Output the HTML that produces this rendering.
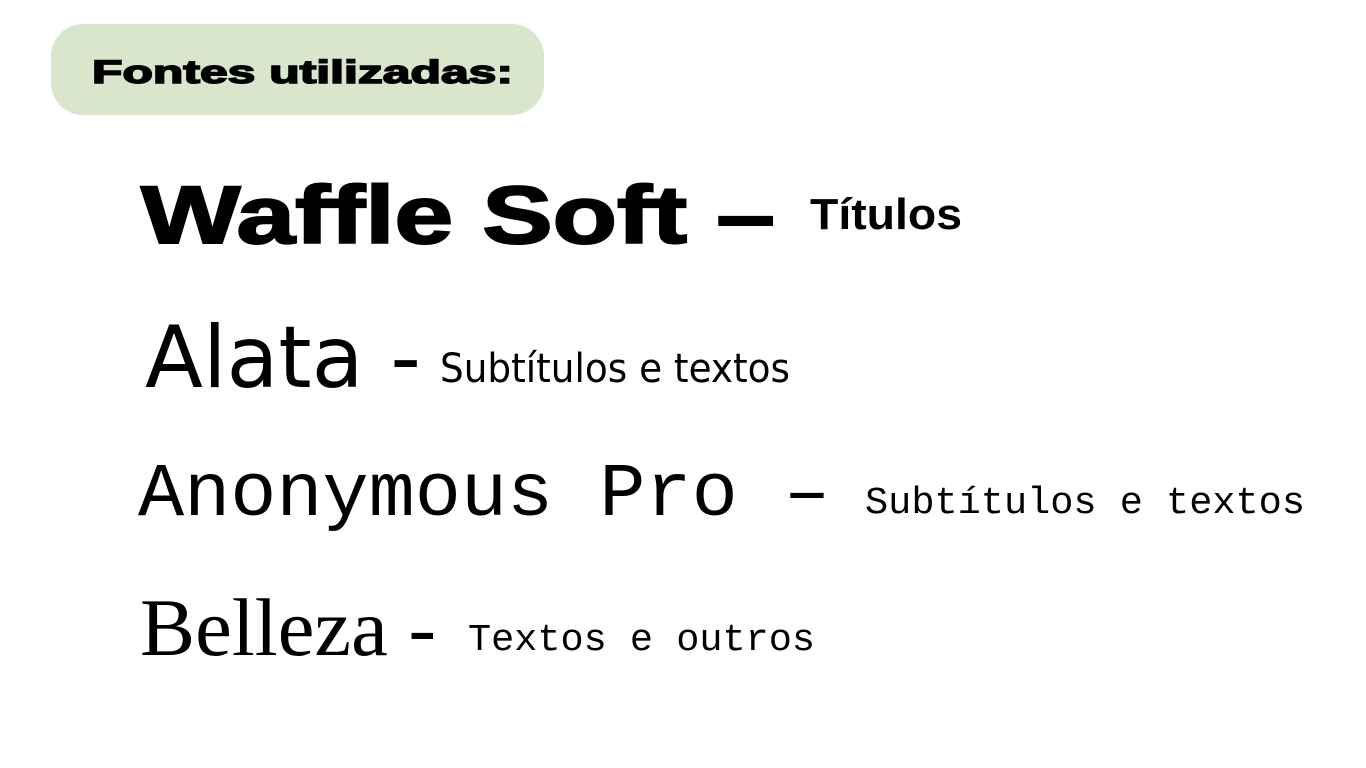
<!DOCTYPE html>
<html><head><meta charset="utf-8"><style>
html,body{margin:0;padding:0;background:#fff;width:1366px;height:768px;overflow:hidden}
</style></head><body>
<svg width="1366" height="768" xmlns="http://www.w3.org/2000/svg">
<rect x="51" y="24" width="493" height="91" rx="32" fill="#d9e6cb"/>
<text x="92" y="83" font-family="Liberation Sans, sans-serif" font-weight="bold" font-size="32" stroke="#000" stroke-width="1.5" textLength="421" lengthAdjust="spacingAndGlyphs" fill="#000">Fontes utilizadas:</text>
<text x="141" y="243" font-family="Liberation Sans, sans-serif" font-weight="bold" font-size="82" stroke="#000" stroke-width="2" textLength="634" lengthAdjust="spacingAndGlyphs" fill="#000">Waffle Soft –</text>
<text x="810" y="229" font-family="Liberation Sans, sans-serif" font-weight="bold" font-size="44" textLength="152" lengthAdjust="spacingAndGlyphs" fill="#000">Títulos</text>
<text x="145" y="387" font-family="DejaVu Sans, sans-serif" font-size="86" textLength="276" lengthAdjust="spacingAndGlyphs" fill="#000">Alata -</text>
<text x="440" y="382" font-family="DejaVu Sans, sans-serif" font-size="40" textLength="350" lengthAdjust="spacingAndGlyphs" fill="#000">Subtítulos e textos</text>
<text x="138" y="515" font-family="Liberation Mono, monospace" font-size="76" textLength="692" lengthAdjust="spacingAndGlyphs" fill="#000">Anonymous Pro –</text>
<text x="865" y="513" font-family="Liberation Mono, monospace" font-size="38" textLength="440" lengthAdjust="spacingAndGlyphs" fill="#000">Subtítulos e textos</text>
<text x="140" y="655" font-family="Liberation Serif, serif" font-size="82" textLength="296" lengthAdjust="spacingAndGlyphs" fill="#000">Belleza -</text>
<text x="468" y="650" font-family="Liberation Mono, monospace" font-size="38" textLength="347" lengthAdjust="spacingAndGlyphs" fill="#000">Textos e outros</text>
</svg>
</body></html>
